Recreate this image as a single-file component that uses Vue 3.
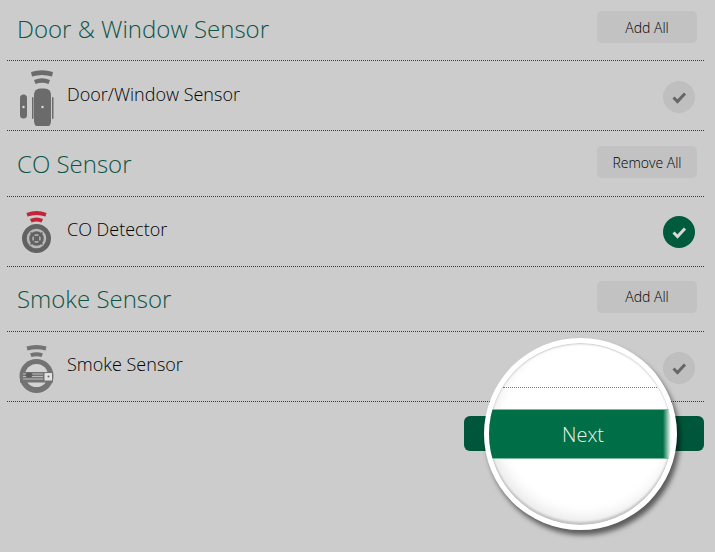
<script setup>
const sections = [
  { title: 'Door & Window Sensor', action: 'Add All', item: 'Door/Window Sensor', icon: 'door', on: false, first: true },
  { title: 'CO Sensor', action: 'Remove All', item: 'CO Detector', icon: 'co', on: true },
  { title: 'Smoke Sensor', action: 'Add All', item: 'Smoke Sensor', icon: 'smoke', on: false },
]
</script>

<template>
  <div class="page">
    <section v-for="s in sections" :key="s.title">
      <header class="head" :class="{ first: s.first }">
        <h2>{{ s.title }}</h2>
        <button class="action">{{ s.action }}</button>
      </header>
      <div class="row">
        <svg class="icon" viewBox="0 0 40 60" width="40" height="60">
          <g v-if="s.icon === 'door'" fill="#6b6b6b">
            <path d="M14 6 Q25 2.500 36 6 L35 10.500 Q25 7.500 15 10.500Z" />
            <path d="M17 14 Q25 10.500 33 14 L31.500 18 Q25 15.500 18.500 18Z" />
            <rect x="3" y="28.500" width="7" height="24" rx="3.500" />
            <rect x="15" y="31" width="1.500" height="22" rx=".7" />
            <rect x="17" y="22.500" width="17" height="39" rx="6" />
            <rect x="35" y="31" width="1.500" height="22" rx=".7" />
            <circle cx="6.500" cy="41" r="1.200" fill="#ddd" />
            <circle cx="25.500" cy="41" r="1.200" fill="#ddd" />
          </g>
          <g v-else-if="s.icon === 'co'">
            <path d="M9.500 12 Q19.500 8 29.500 12 L28.500 15.500 Q19.500 12.500 10.500 15.500Z" fill="#c4243a" />
            <path d="M13 18 Q19.500 15 26 18 L24.500 21.500 Q19.500 19.500 14.500 21.500Z" fill="#c4243a" />
            <circle cx="19.500" cy="37.500" r="14.500" fill="#626262" />
            <circle cx="19.500" cy="37.500" r="8.500" fill="none" stroke="#b8b8b8" stroke-width="2.500" />
            <circle cx="19.500" cy="37.500" r="3.500" fill="none" stroke="#b8b8b8" stroke-width="1.500" />
            <path d="M13.500 31.500l12 12M25.500 31.500l-12 12" stroke="#626262" stroke-width="1.500" />
          </g>
          <g v-else fill="#737373">
            <path d="M9.500 9.500 Q19.500 6.500 29.500 9.500 L28.500 13.500 Q19.500 11 10.500 13.500Z" />
            <path d="M13 16.500 Q19.500 14 26 16.500 L24.500 20 Q19.500 18.500 14.500 20Z" />
            <circle cx="19.500" cy="39" r="17" />
            <circle cx="19.500" cy="38.500" r="11.500" fill="#d4d4d4" />
            <rect x="3" y="35" width="33" height="10.500" fill="#737373" />
            <path d="M6 37h20M6 39.500h20M6 42h20" stroke="#cfcfcf" stroke-width=".8" />
            <rect x="27.500" y="36" width="7.500" height="7.500" rx=".5" fill="#e2e2e2" />
            <circle cx="31.500" cy="39.500" r="1" fill="#666" />
            <ellipse cx="12" cy="38" rx="3.500" ry="2.500" fill="#5c5c5c" />
          </g>
        </svg>
        <span class="label">{{ s.item }}</span>
        <span class="check" :class="{ on: s.on }">
          <svg viewBox="0 0 32 32" width="32" height="32">
            <path d="M10.500 16.500l4 4 7.500-8" fill="none" stroke="currentColor" stroke-width="3" />
          </svg>
        </span>
      </div>
    </section>

    <div class="footer">
      <button class="next" aria-label="Next"></button>
    </div>

    <div class="lens">
      <div class="lens-line"></div>
      <div class="lens-band">Next</div>
    </div>
  </div>
</template>

<style scoped>
.page {
  position: relative;
  box-sizing: border-box;
  width: 715px;
  height: 552px;
  padding: 0 11px 0 7px;
  overflow: hidden;
  background: #cccccc;
  font-family: "Open Sans", sans-serif;
}
.head {
  display: flex;
  align-items: flex-start;
  justify-content: space-between;
  box-sizing: border-box;
  height: 65.6px;
  padding: 15px 7px 0 10px;
  border-bottom: 1px dotted #0d4f3a;
}
.head.first {
  height: 61px;
  padding-top: 11px;
}
section:last-of-type .head {
  padding-top: 14px;
}
section:last-of-type .label {
  margin-top: -6px;
}
h2 {
  margin: 0;
  font-size: 24px;
  line-height: 36px;
  font-weight: 300;
  color: #0c5546;
}
.action {
  width: 100px;
  height: 32px;
  padding: 0;
  border: 0;
  border-radius: 5px;
  background: #c2c2c2;
  font-family: inherit;
  font-size: 14px;
  font-weight: 300;
  color: #000;
}
.row {
  display: flex;
  align-items: center;
  box-sizing: border-box;
  height: 70px;
  padding: 0 9px 0 10px;
  border-bottom: 1px dotted #0d4f3a;
}
.icon {
  flex: none;
  margin-right: 10px;
}
.label {
  flex: 1;
  margin-top: -4px;
  font-size: 18px;
  font-weight: 300;
  color: #000;
}
.check {
  width: 32px;
  height: 32px;
  border-radius: 50%;
  background: #bfbfbf;
  color: #666;
  margin-top: 2px;
}
.check svg {
  display: block;
}
.check.on {
  background: #005a3c;
  color: #d8d8d8;
}
.footer {
  display: flex;
  justify-content: flex-end;
  padding-top: 14px;
}
.next {
  width: 240px;
  height: 35px;
  border: 0;
  border-radius: 6px;
  background: #00563a;
}
.lens {
  position: absolute;
  left: 484px;
  top: 338px;
  box-sizing: border-box;
  width: 193px;
  height: 192px;
  padding-top: 44px;
  overflow: hidden;
  border: 5px solid #fff;
  border-radius: 50%;
  background: #fff;
  box-shadow: 3px 5px 5px rgba(0, 0, 0, 0.55);
}
.lens::after {
  content: "";
  position: absolute;
  inset: 0;
  border-radius: 50%;
  box-shadow: inset 0 1px 2px rgba(0, 0, 0, 0.22), inset 0 -3px 2px rgba(0, 0, 0, 0.16), inset 4px -8px 14px rgba(0, 0, 0, 0.09);
}
.lens-line {
  margin: 0 15px 0 14px;
  border-top: 1px dotted #3a9c7c;
}
.lens-band {
  position: relative;
  z-index: 1;
  margin-top: 21px;
  height: 50px;
  line-height: 50px;
  text-align: center;
  font-size: 20px;
  font-weight: 300;
  color: #e9f3ee;
  background: linear-gradient(90deg, #006f47 0, #006f47 174px, #7fb8a0 178px, #fff 182px);
  padding-left: 5px;
  box-sizing: border-box;
  border-top: 1px solid #7fb8a0;
  border-bottom: 1px solid #7fb8a0;
}
</style>

<style>
html, body { margin: 0; background: #ccc; }
</style>
